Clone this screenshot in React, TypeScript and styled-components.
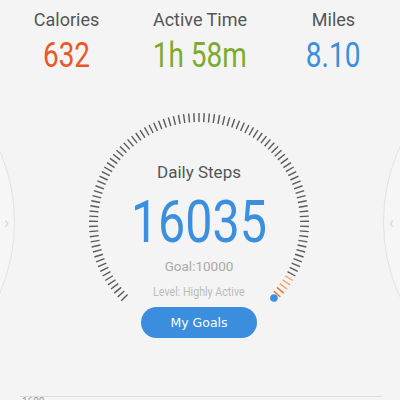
import React from "react";
import styled, { createGlobalStyle } from "styled-components";

const GlobalStyle = createGlobalStyle`
  html, body {
    margin: 0;
    padding: 0;
    background: #f4f4f4;
    font-family: Roboto, "Liberation Sans", sans-serif;
  }
  body {
    width: 400px;
    height: 400px;
    overflow: hidden;
  }
`;

const Page = styled.div`
  width: 400px;
  height: 400px;
  overflow: hidden;
  background: #f4f4f4;
`;

const Stats = styled.div`
  display: grid;
  grid-template-columns: 133px 134px 133px;
  padding-top: 9px;
`;

const Stat = styled.div`
  display: flex;
  flex-direction: column;
  align-items: center;
`;

const StatLabel = styled.span`
  font-size: 18px;
  line-height: 22px;
  color: #555;
`;

const StatValue = styled.span<{ $color: string }>`
  margin-top: 6px;
  font-size: 35px;
  line-height: 38px;
  color: ${(p) => p.$color};
  display: inline-block;
  transform: scaleX(0.8);
`;

const Stage = styled.div`
  display: flex;
  justify-content: space-between;
  align-items: flex-start;
  margin-top: 38px;
  height: 230px;
`;

const Ghost = styled.div<{ $side: "left" | "right" }>`
  flex: none;
  width: 360px;
  height: 360px;
  margin-top: -71px;
  ${(p) => (p.$side === "left" ? "margin-left: -345px;" : "margin-right: -343px;")}
  border-radius: 50%;
  border: 1px solid #e2e2e2;
  background: #f6f6f6;
  box-sizing: border-box;
  display: flex;
  align-items: center;
  justify-content: ${(p) => (p.$side === "left" ? "flex-end" : "flex-start")};
  padding: 0 5px;
  color: #d4d4d4;
  font-size: 16px;
`;

const Gauge = styled.div`
  position: relative;
  flex: none;
  width: 220px;
  height: 230px;
  display: flex;
  flex-direction: column;
  align-items: center;
  padding-top: 49px;
  box-sizing: border-box;
`;

const Ring = styled.svg`
  position: absolute;
  left: 0;
  top: 0;
`;

const Title = styled.span`
  position: relative;
  font-size: 17px;
  line-height: 20px;
  color: #555;
`;

const Steps = styled.span`
  position: relative;
  margin-top: 10px;
  font-size: 59px;
  line-height: 60px;
  color: #3b8fdc;
  display: inline-block;
  transform: scaleX(0.82);
`;

const Goal = styled.span`
  position: relative;
  margin-top: 5px;
  font-size: 13.5px;
  line-height: 18px;
  color: #aaa;
`;

const Level = styled.span`
  position: relative;
  margin-top: 9px;
  font-size: 13px;
  line-height: 16px;
  color: #bbb;
  display: inline-block;
  transform: scaleX(0.82);
  white-space: nowrap;
`;

const GoalsButton = styled.button`
  position: relative;
  margin-top: 7px;
  width: 116px;
  height: 31px;
  border: none;
  border-radius: 16px;
  background: #3a8edd;
  color: #fff;
  font-family: "DejaVu Sans", "Noto Sans", sans-serif;
  font-size: 12.5px;
  cursor: pointer;
`;

const Chart = styled.div`
  margin: 53px 18px 0 20px;
  border-top: 1px solid #dcdcdc;
`;

const AxisLabel = styled.span`
  display: block;
  font-size: 10px;
  line-height: 10px;
  color: #999;
  padding-left: 2px;
`;

const CX = 110;
const CY = 110;

const Ticks = () => {
  const items = [];
  const step = 270 / 100;
  for (let i = 0; i < 100; i++) {
    const a = -135 + i * step;
    const rad = (a * Math.PI) / 180;
    const s = Math.sin(rad);
    const c = -Math.cos(rad);
    const r1 = 101;
    const r2 = 110;
    let color = "#5a5a5a";
    if (a >= 121) color = a >= 127 ? "#e8742c" : "#efa066";
    items.push(
      <line
        key={i}
        x1={CX + s * r1}
        y1={CY + c * r1}
        x2={CX + s * r2}
        y2={CY + c * r2}
        stroke={color}
        strokeWidth={1.4}
      />
    );
  }
  const end = (135 * Math.PI) / 180;
  return (
    <>
      {items}
      <circle
        cx={CX + Math.sin(end) * 106}
        cy={CY - Math.cos(end) * 106}
        r={3.8}
        fill="#3b8fdc"
      />
    </>
  );
};

export default function App() {
  return (
    <Page>
      <GlobalStyle />
      <Stats>
        <Stat>
          <StatLabel>Calories</StatLabel>
          <StatValue $color="#e8582a">632</StatValue>
        </Stat>
        <Stat>
          <StatLabel>Active Time</StatLabel>
          <StatValue $color="#7dab2f">1h 58m</StatValue>
        </Stat>
        <Stat>
          <StatLabel>Miles</StatLabel>
          <StatValue $color="#3b8fdc">8.10</StatValue>
        </Stat>
      </Stats>
      <Stage>
        <Ghost $side="left">›</Ghost>
        <Gauge>
          <Ring width={220} height={220} viewBox="0 0 220 220">
            <Ticks />
          </Ring>
          <Title>Daily Steps</Title>
          <Steps>16035</Steps>
          <Goal>Goal:10000</Goal>
          <Level>Level: Highly Active</Level>
          <GoalsButton>My Goals</GoalsButton>
        </Gauge>
        <Ghost $side="right">‹</Ghost>
      </Stage>
      <Chart>
        <AxisLabel>1600</AxisLabel>
      </Chart>
    </Page>
  );
}
